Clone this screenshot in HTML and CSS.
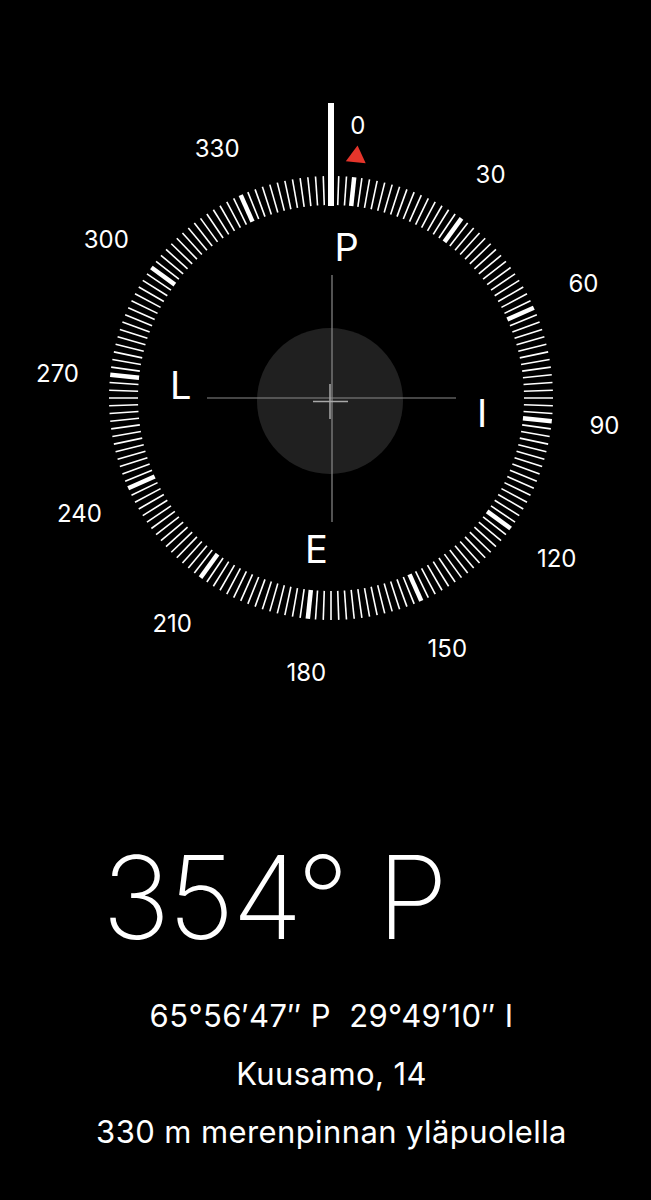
FILE: index.html
```html
<!DOCTYPE html>
<html lang="fi">
  <head>
    <meta charset="utf-8">
    <title>Kompassi</title>
    <link rel="stylesheet" href="styles.css">
  </head>
  <body>
    <!-- Kompassin kehä -->
    <div class="dial-wrap">
      <svg id="dial" class="dial" width="651" height="720" viewBox="0 0 651 720">
        <g id="ticks" transform="rotate(6 331 398)"></g>

        <!-- Asteluvut -->
        <g class="deg">
          <text x="357.7" y="125">0</text>
          <text x="490.6" y="174.5">30</text>
          <text x="583.5" y="283.5">60</text>
          <text x="604.5" y="425.7">90</text>
          <text x="556.7" y="558.4">120</text>
          <text x="447.3" y="648.5">150</text>
          <text x="306.3" y="672.5">180</text>
          <text x="172.2" y="623.7">210</text>
          <text x="79.5" y="513.5">240</text>
          <text x="57.5" y="373.3">270</text>
          <text x="106.3" y="239.6">300</text>
          <text x="217.2" y="148.5">330</text>
        </g>

        <!-- Ilmansuunnat -->
        <g class="card">
          <text x="346.7" y="246.8">P</text>
          <text x="482.2" y="412.7">I</text>
          <text x="316.3" y="549.2">E</text>
          <text x="180.8" y="385.3">L</text>
        </g>

        <!-- Pohjoisen merkki -->
        <polygon class="north" points="331,144 341,161 321,161" transform="rotate(6 331 398)"></polygon>

        <!-- Suuntaviiva -->
        <rect class="heading" x="328" y="103" width="6" height="103"></rect>

        <!-- Vesivaaka -->
        <circle class="bubble" cx="330" cy="401" r="73"></circle>
        <line class="cross" x1="332" y1="275" x2="332" y2="522"></line>
        <line class="cross" x1="207" y1="398" x2="456" y2="398"></line>
        <line class="cross-small" x1="330" y1="384" x2="330" y2="419"></line>
        <line class="cross-small" x1="313" y1="401.5" x2="348" y2="401.5"></line>
      </svg>
    </div>

    <!-- Suunta ja sijainti -->
    <div class="readout">
      <div class="bearing">354° P</div>
      <div class="info">
        <p>65°56′47″ P&nbsp;&nbsp;29°49′10″ I</p>
        <p>Kuusamo, 14</p>
        <p>330 m merenpinnan yläpuolella</p>
      </div>
    </div>

    <script src="compass.js"></script>
  </body>
</html>
```

FILE: styles.css
```css
/* Perustyyli */
body {
  margin: 0;
  padding: 0;
  background: #000;
  color: #fff;
  font-family: Inter, "Noto Sans", sans-serif;
  width: 651px;
  height: 1200px;
  overflow: hidden;
}

.dial-wrap {
  height: 720px;
}

.dial {
  display: block;
}

.tick {
  stroke: #fff;
  stroke-width: 1.6;
}

.tick.major {
  stroke-width: 4.5;
}

.deg text {
  fill: #fff;
  font-size: 24px;
  text-anchor: middle;
  dominant-baseline: central;
}

.card text {
  fill: #fff;
  font-size: 38px;
  text-anchor: middle;
  dominant-baseline: central;
}

.north {
  fill: #e5352b;
}

.heading {
  fill: #fff;
}

.bubble {
  fill: #202020;
}

.cross {
  stroke: #8a8a8a;
  stroke-width: 1.2;
}

.cross-small {
  stroke: #a8a8a8;
  stroke-width: 1.5;
}

/* Lukemat */
.readout {
  padding-top: 120px;
}

.bearing {
  font-size: 115px;
  font-weight: 200;
  line-height: 1;
  padding-left: 102px;
  letter-spacing: -2.3px;
}

.info {
  margin-top: 32px;
  padding-left: 12px;
  text-align: center;
}

.info p {
  margin: 0;
  font-size: 31px;
  line-height: 58px;
  letter-spacing: 0.4px;
}
```

FILE: compass.js
```js
// Kehän viivat 2 asteen välein, joka 30. aste paksumpi
var ticks = document.getElementById("ticks");
var cx = 331, cy = 398, outer = 222, inner = 193;

for (var a = 0; a < 360; a += 2) {
  var rad = a * Math.PI / 180;
  var line = document.createElementNS("http://www.w3.org/2000/svg", "line");
  line.setAttribute("x1", cx + inner * Math.sin(rad));
  line.setAttribute("y1", cy - inner * Math.cos(rad));
  line.setAttribute("x2", cx + outer * Math.sin(rad));
  line.setAttribute("y2", cy - outer * Math.cos(rad));
  line.setAttribute("class", a % 30 == 0 ? "tick major" : "tick");
  ticks.appendChild(line);
}
```
